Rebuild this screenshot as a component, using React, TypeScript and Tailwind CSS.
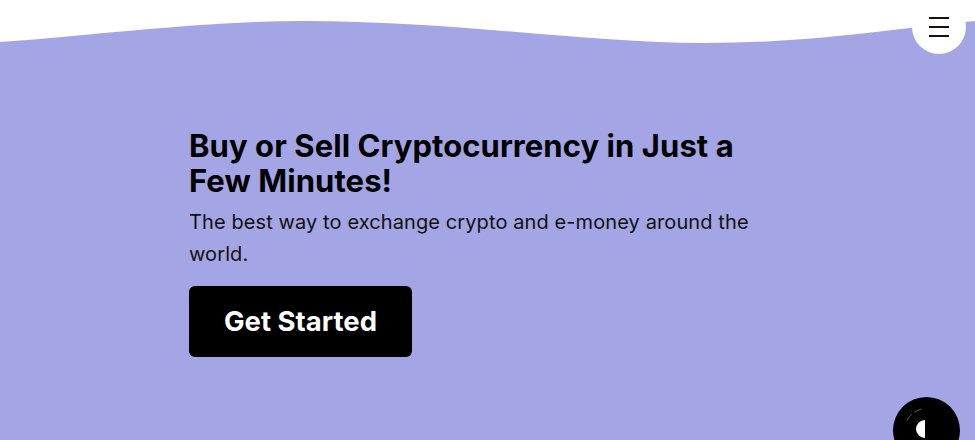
import React from "react";

export default function App() {
  return (
    <div className="relative w-[975px] h-[440px] overflow-hidden bg-white font-['Inter',sans-serif]">
      <svg width="975" height="44" viewBox="0 0 975 44" className="block">
        <path
          d="M0,42 C110,34 200,21 305,21 C450,21 590,43 703,43 C820,43 900,27 975,21 L975,44 L0,44 Z"
          fill="#a4a5e4"
        />
      </svg>
      <div className="h-[396px] bg-[#a4a5e4] pl-[189px] pt-[84px]">
        <h1 className="w-[580px] text-[31px] leading-[35px] font-bold text-black tracking-[0.07px]">
          Buy or Sell Cryptocurrency in Just a Few Minutes!
        </h1>
        <p className="mt-[8px] w-[575px] text-[20px] leading-[32px] text-[#111] tracking-[0.1px]">
          The best way to exchange crypto and e-money around the world.
        </p>
        <button className="mt-[16px] w-[223px] h-[71px] rounded-[6px] bg-black text-white text-[27.5px] font-bold">
          Get Started
        </button>
      </div>

      <div className="absolute left-[912px] top-0 w-[54px] h-[54px] rounded-full bg-white flex flex-col items-center justify-center gap-[7px]">
        <span className="block w-[20px] h-[2px] bg-[#1a1010]" />
        <span className="block w-[20px] h-[2px] bg-[#1a1010]" />
        <span className="block w-[20px] h-[2px] bg-[#1a1010]" />
      </div>

      <div className="absolute left-[893px] top-[397px] w-[67px] h-[67px] rounded-full bg-black">
        <svg width="67" height="67" viewBox="0 0 67 67" className="block">
          <circle cx="33.5" cy="33.5" r="22" fill="none" stroke="#555" strokeWidth="1" strokeDasharray="8 60" strokeDashoffset="-22" />
          <circle cx="33.5" cy="33.5" r="22" fill="none" stroke="#555" strokeWidth="1" strokeDasharray="8 60" strokeDashoffset="-79" />
          <path d="M32,23 A9,9 0 0 0 32,41 Z" fill="white" />
        </svg>
      </div>
    </div>
  );
}
